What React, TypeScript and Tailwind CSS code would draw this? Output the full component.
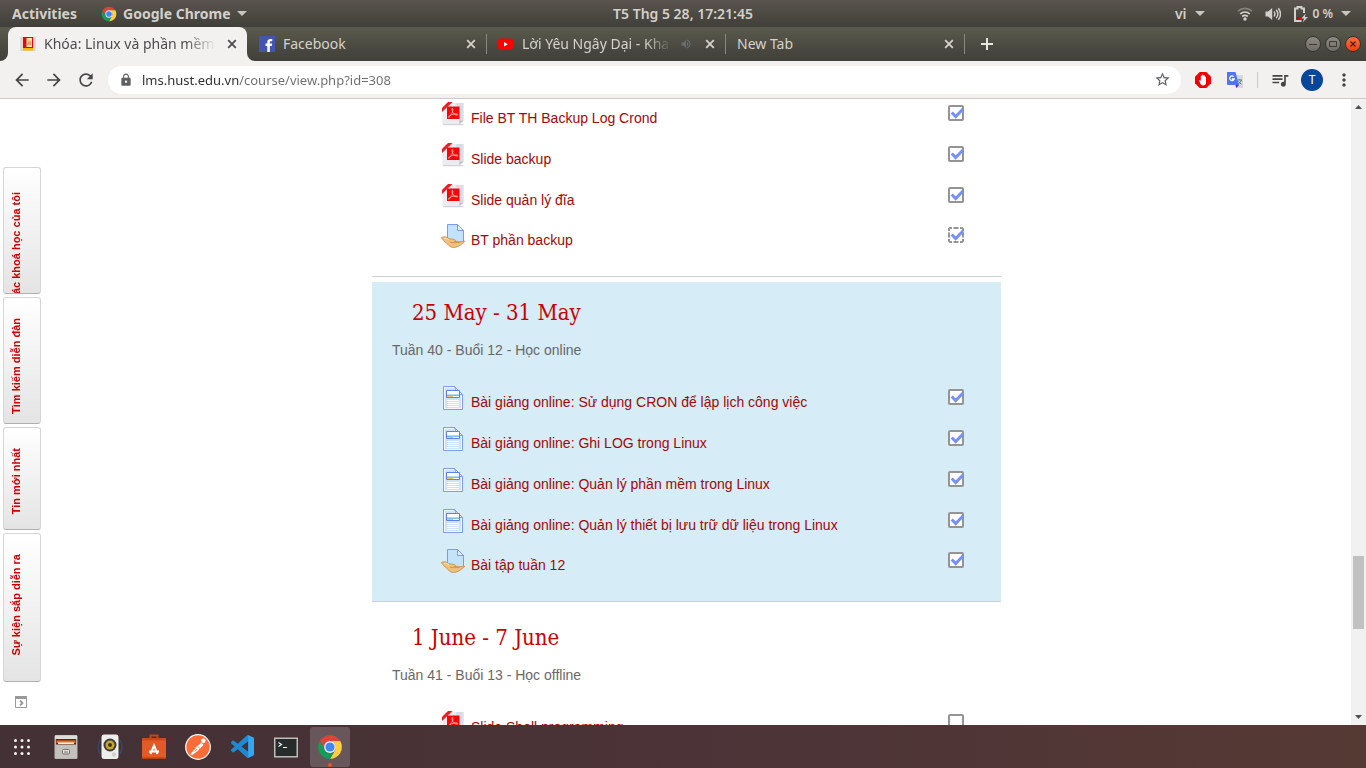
import React from "react";
import {
  MdArrowBack,
  MdArrowForward,
  MdLock,
  MdMoreVert,
  MdQueueMusic,
  MdRefresh,
  MdStarBorder,
  MdVolumeUp,
} from "react-icons/md";

type ActivityKind = "pdf" | "page" | "assign";
type Activity = { id: string; kind: ActivityKind; name: string; done: boolean; auto?: boolean };
type Week = { id: string; title?: string; summary?: string; current?: boolean; items: Activity[] };

const weeks: Week[] = [
  {
    id: "w39",
    items: [
      { id: "a1", kind: "pdf", name: "File BT TH Backup Log Crond", done: true },
      { id: "a2", kind: "pdf", name: "Slide backup", done: true },
      { id: "a3", kind: "pdf", name: "Slide quản lý đĩa", done: true },
      { id: "a4", kind: "assign", name: "BT phần backup", done: true, auto: true },
    ],
  },
  {
    id: "w40",
    title: "25 May - 31 May",
    summary: "Tuần 40 - Buổi 12 - Học online",
    current: true,
    items: [
      { id: "b1", kind: "page", name: "Bài giảng online: Sử dụng CRON để lập lịch công việc", done: true },
      { id: "b2", kind: "page", name: "Bài giảng online: Ghi LOG trong Linux", done: true },
      { id: "b3", kind: "page", name: "Bài giảng online: Quản lý phần mềm trong Linux", done: true },
      { id: "b4", kind: "page", name: "Bài giảng online: Quản lý thiết bị lưu trữ dữ liệu trong Linux", done: true },
      { id: "b5", kind: "assign", name: "Bài tập tuần 12", done: true },
    ],
  },
  {
    id: "w41",
    title: "1 June - 7 June",
    summary: "Tuần 41 - Buổi 13 - Học offline",
    items: [{ id: "c1", kind: "pdf", name: "Slide Shell programming", done: false }],
  },
];

function ChromeLogo({ className }: { className: string }) {
  return (
    <svg viewBox="0 0 48 48" className={className} aria-hidden="true">
      <path fill="#db4437" d="M4.95 13A22 22 0 0 1 43.05 13H24A11 11 0 0 0 14.47 29.5Z" />
      <path fill="#ffcd40" d="M43.05 13A22 22 0 0 1 24 46L33.53 29.5A11 11 0 0 0 24 13Z" />
      <path fill="#0f9d58" d="M24 46A22 22 0 0 1 4.95 13L14.47 29.5A11 11 0 0 0 33.53 29.5Z" />
      <circle cx="24" cy="24" r="11" fill="#f1f1f1" />
      <circle cx="24" cy="24" r="8.5" fill="#4285f4" />
    </svg>
  );
}

function Caret() {
  return (
    <svg viewBox="0 0 10 5" className="h-[5px] w-[10px]" aria-hidden="true">
      <path d="M0 0h10L5 5z" fill="#c9c7c1" />
    </svg>
  );
}

function TopBar() {
  return (
    <header className="grid h-[27px] shrink-0 grid-cols-[1fr_auto_1fr] items-center bg-linear-to-b from-[#5a554e] to-[#403f39] text-sm font-semibold text-[#d2d0ca] [text-shadow:0_-1px_0_#33322e]">
      <div className="flex items-center pl-3 font-bold">
        <button type="button">Activities</button>
        <button type="button" className="ml-6 flex items-center gap-1.5">
          <ChromeLogo className="size-4" />
          Google Chrome
          <Caret />
        </button>
      </div>
      <button type="button">T5 Thg 5 28, 17:21:45</button>
      <div className="flex items-center justify-end pr-[15px]">
        <button type="button" className="flex items-center gap-2">
          vi
          <Caret />
        </button>
        <button type="button" className="ml-8 flex items-center text-xs" aria-label="System menu">
          <svg viewBox="0 0 16 14" className="h-[14px] w-4" fill="none" stroke="#d2d0ca" strokeWidth="1.7" aria-hidden="true">
            <path d="M1 4.2C5 .4 11 .4 15 4.2" opacity=".4" />
            <path d="M3.2 7C6 4.4 10 4.4 12.800 7" />
            <path d="M5.200 9.500c1.700-1.500 3.900-1.500 5.600 0" />
            <circle cx="8" cy="12" r="1.700" fill="#d2d0ca" stroke="none" />
          </svg>
          <svg viewBox="0 0 16 16" className="ml-3 size-4" fill="none" stroke="#d2d0ca" strokeWidth="1.4" aria-hidden="true">
            <path d="M0.500 5.500H3L7.200 2v12L3 10.500H.5z" fill="#d2d0ca" stroke="none" />
            <path d="M9 5.500c1.100 1.500 1.100 3.500 0 5M11.200 3.800c2 2.500 2 5.900 0 8.400M13.300 2.200c2.700 3.500 2.700 8.100 0 11.600" />
          </svg>
          <svg viewBox="0 0 16 18" className="ml-3 h-[18px] w-4" aria-hidden="true">
            <path d="M8.500 16H2V3.500h2.500V2h4v1.500H11V8" fill="none" stroke="#d2d0ca" strokeWidth="2" />
            <path d="M4 12h4v2.500H4z" fill="#d40000" />
            <path d="M12.500 8.500L8.500 13.500h2.700L9.500 17.500 15 12h-3z" fill="#d2d0ca" />
          </svg>
          <span className="ml-1">0 %</span>
          <span className="ml-2">
            <Caret />
          </span>
        </button>
      </div>
    </header>
  );
}

function HustIcon() {
  return (
    <svg viewBox="0 0 16 16" className="size-4 shrink-0" aria-hidden="true">
      <path d="M0 1h16v14H0z" fill="#dcd9d8" />
      <path d="M3 1h10v11H3z" fill="#e30613" />
      <path d="M6.500 2H12v9H6.500z" fill="#fbe7a4" />
      <path d="M7 9l2-5 1 2 1-2v5z" fill="#f39a5e" />
      <path d="M3 12h10v2.500H3z" fill="#fbb400" />
    </svg>
  );
}

function FacebookIcon() {
  return (
    <svg viewBox="0 0 16 16" className="size-4 shrink-0" aria-hidden="true">
      <path d="M0 0h16v16H0z" fill="#4355b0" />
      <path d="M8.300 16V10H6.500V7.600h1.800V6.200c0-2.100 1.200-3.200 3.200-3.200h1.700v2.300h-1.200c-.9 0-1.200.4-1.200 1.200v1.100h2.400L12.800 10h-2v6z" fill="#fff" />
    </svg>
  );
}

function YoutubeIcon() {
  return (
    <svg viewBox="0 0 16 16" className="size-4 shrink-0" aria-hidden="true">
      <rect x="0" y="2.500" width="15" height="11" rx="2.500" fill="#f00" />
      <path d="M6 6v4.400l3.800-2.200z" fill="#fff" />
    </svg>
  );
}

type Tab = { title: string; icon?: React.ReactNode; active?: boolean; audio?: boolean; faded?: boolean; divider?: boolean };

const tabs: Tab[] = [
  { title: "Khóa: Linux và phần mềm", icon: <HustIcon />, active: true, faded: true },
  { title: "Facebook", icon: <FacebookIcon />, divider: true },
  { title: "Lời Yêu Ngây Dại - Kha", icon: <YoutubeIcon />, audio: true, faded: true, divider: true },
  { title: "New Tab", divider: true },
];

function TabItem({ tab }: { tab: Tab }) {
  return (
    <div
      className={
        tab.active
          ? "relative flex w-[239px] min-w-0 items-center gap-2 rounded-t-lg bg-[#f2f1f0] pr-[7px] pl-3 text-[#4c4c4c]"
          : "relative flex w-[239px] min-w-0 items-center gap-2 pr-[7px] pl-3 text-[#d5d3cc]"
      }
    >
      {tab.active && (
        <>
          <svg viewBox="0 0 8 8" className="absolute bottom-0 -left-2 size-2" aria-hidden="true">
            <path d="M8 0v8H0a8 8 0 0 0 8-8z" fill="#f2f1f0" />
          </svg>
          <svg viewBox="0 0 8 8" className="absolute -right-2 bottom-0 size-2" aria-hidden="true">
            <path d="M0 0v8h8a8 8 0 0 1-8-8z" fill="#f2f1f0" />
          </svg>
        </>
      )}
      {tab.divider && <span className="absolute top-[7px] -right-px h-5 w-px bg-[#8b897f]" />}
      {tab.icon}
      <button
        type="button"
        className={
          tab.faded
            ? "min-w-0 flex-1 overflow-hidden text-left whitespace-nowrap [mask-image:linear-gradient(to_right,black_82%,transparent)]"
            : "min-w-0 flex-1 overflow-hidden text-left whitespace-nowrap"
        }
      >
        {tab.title}
      </button>
      {tab.audio && <MdVolumeUp className="mr-0.5 size-3 shrink-0 text-[#686d7c]" />}
      <button type="button" aria-label="Close tab" className="flex size-4 shrink-0 items-center justify-center">
        <svg viewBox="0 0 16 16" className="size-4" aria-hidden="true">
          <path d="M4.200 4.200l7.600 7.600M11.800 4.200l-7.600 7.600" stroke="currentColor" strokeWidth="1.800" />
        </svg>
      </button>
    </div>
  );
}

function TabStrip() {
  return (
    <div className="flex h-[34px] shrink-0 bg-linear-to-b from-[#5b5a4d] to-[#403f39] pr-[5px] pl-2 text-sm">
      {tabs.map((tab) => (
        <TabItem key={tab.title} tab={tab} />
      ))}
      <button type="button" aria-label="New tab" className="ml-[13px] flex items-center text-[#e8e6e0]">
        <svg viewBox="0 0 20 20" className="size-5" aria-hidden="true">
          <path d="M10 4v12M4 10h12" stroke="currentColor" strokeWidth="2" />
        </svg>
      </button>
      <div className="ml-auto flex items-center gap-1">
        <button type="button" aria-label="Minimize" className="size-4 rounded-full border border-[#35342f] bg-linear-to-b from-[#8c8a83] to-[#6f6d66]">
          <svg viewBox="0 0 14 14" aria-hidden="true">
            <path d="M3 7.500h8" stroke="#3b3a35" />
          </svg>
        </button>
        <button type="button" aria-label="Maximize" className="size-4 rounded-full border border-[#35342f] bg-linear-to-b from-[#8c8a83] to-[#6f6d66]">
          <svg viewBox="0 0 14 14" aria-hidden="true">
            <path d="M3.500 4.500h7v5h-7z" fill="none" stroke="#3b3a35" />
          </svg>
        </button>
        <button type="button" aria-label="Close" className="size-4 rounded-full border border-[#35342f] bg-linear-to-b from-[#fb6d40] to-[#ee3f05]">
          <svg viewBox="0 0 14 14" aria-hidden="true">
            <path d="M4.500 4.500l5 5m0-5l-5 5" stroke="#4a2010" strokeWidth="1.300" />
          </svg>
        </button>
      </div>
    </div>
  );
}

const toolButton = "flex h-7 w-8 shrink-0 items-center justify-center text-[#454545]";

function Toolbar() {
  return (
    <div className="flex h-[38px] shrink-0 items-center border-b border-[#cbcac9] bg-[#f2f1f0] px-1.5">
      <button type="button" aria-label="Back" className={toolButton}>
        <MdArrowBack className="size-5" />
      </button>
      <button type="button" aria-label="Forward" className={toolButton}>
        <MdArrowForward className="size-5" />
      </button>
      <button type="button" aria-label="Reload" className={toolButton}>
        <MdRefresh className="size-5" />
      </button>
      <form className="mx-1.5 flex h-7 min-w-0 flex-1 items-center rounded-full bg-white pr-[10px] pl-[11px]">
        <MdLock className="size-[14px] shrink-0 text-[#5f6063]" />
        <label htmlFor="address" className="hidden">
          Address
        </label>
        <input
          id="address"
          defaultValue="lms.hust.edu.vn/course/view.php?id=308"
          className="ml-[9px] min-w-0 flex-1 bg-linear-to-r from-[#2c2c2c] from-[97px] to-[#6c6c6c] to-[97px] bg-clip-text text-[13px] leading-5 text-transparent caret-black outline-none"
        />
        <button type="button" aria-label="Bookmark" className="text-[#5f6063]">
          <MdStarBorder className="size-[17px]" />
        </button>
      </form>
      <button type="button" aria-label="AdBlock" className={toolButton}>
        <svg viewBox="0 0 16 16" className="size-4" aria-hidden="true">
          <path d="M4.700 0h6.600L16 4.700v6.600L11.300 16H4.700L0 11.300V4.700z" fill="#f20000" />
          <path d="M4 8.200l1-.3.800 1.200V4c0-.8 1.100-.8 1.200 0l.1-1c.1-.8 1.200-.8 1.300 0l.1.700c.2-.8 1.200-.7 1.300.1V5c.2-.7 1.200-.6 1.200.2v5.300c0 1.900-1 3-2.800 3-1.700 0-2.400-.8-2.900-2z" fill="#fff" />
        </svg>
      </button>
      <button type="button" aria-label="Google Translate" className={toolButton}>
        <svg viewBox="0 0 16 16" className="size-4" aria-hidden="true">
          <path d="M6 3h10v13H9z" fill="#d6d8d9" />
          <path d="M0 0h8.500L12 13H1a1 1 0 0 1-1-1z" fill="#4e74f8" />
          <path d="M8.500 13H12l-2.800 3z" fill="#3a2fc0" />
          <path d="M6.800 4.700A2.300 2.300 0 1 0 7.200 7H5" fill="none" stroke="#fff" strokeWidth="1.300" />
          <path d="M10.500 8h4.500M12.700 7v1M14.200 8c-.4 2-1.500 3.200-3 4M11.500 9.500c.7 1.200 1.700 2.100 3 2.700" fill="none" stroke="#5e7f88" />
        </svg>
      </button>
      <span className="mx-1.5 h-4 w-px bg-[#c9c8c7]" />
      <button type="button" aria-label="Media" className={toolButton}>
        <MdQueueMusic className="size-5" />
      </button>
      <button type="button" aria-label="Profile" className={toolButton}>
        <span className="flex size-[22px] items-center justify-center rounded-full bg-[#06479c] text-xs text-white">T</span>
      </button>
      <button type="button" aria-label="Menu" className={toolButton}>
        <MdMoreVert className="size-5" />
      </button>
    </div>
  );
}

function PdfIcon() {
  return (
    <svg viewBox="0 0 24 24" className="size-6" aria-hidden="true">
      <path d="M2 22.700h20.500" stroke="#c9c9cd" />
      <path d="M1.500 1h21v17.500l-4 3.500h-17z" fill="#ebebf1" />
      <path d="M15 1h7.500v17.500l-4 3.500z" fill="#dcdce6" />
      <path d="M22.500 18.500h-4V22z" fill="#bdbdc6" />
      <path d="M0 0h6L0 6.500z" fill="#fff" />
      <path d="M7 0h4.500L1 10V6z" fill="#ee1c25" />
      <path d="M6 4.500h12.500v12.500H6z" fill="#f30808" />
      <path d="M11.300 6.300c.8 0 .7 1.700.3 3.200-.6 2-2.700 5.600-3.900 5.800-.9-.7 1.200-2.200 3.400-2.800 2.200-.6 5.400-.9 5.800 0 .2.900-2.700.6-4.300-1-1.300-1.400-2.100-4.900-1.300-5.200z" fill="none" stroke="#ffd5d5" strokeWidth=".7" />
    </svg>
  );
}

function PageIcon() {
  return (
    <svg viewBox="0 0 24 24" className="size-6" aria-hidden="true">
      <path d="M2.500.5h11l8 8v15h-19z" fill="#f4f9ff" stroke="#7f9cf0" />
      <path d="M4 2h8.500L20 9.500V22H4z" fill="#cde3fb" />
      <path d="M13.500.5l8 8h-5z" fill="#e6effc" stroke="#7f9cf0" />
      <path d="M5.500 4.500h13v7h-13z" fill="#fff" stroke="#5f80e6" />
      <path d="M6 9.200h12" stroke="#6fbdf0" strokeWidth="1.500" />
      <path d="M6 10.500h6" stroke="#e8c76b" />
      <path d="M6 14.500h12M6 16.500h12M6 18.500h12M6 20.500h12" stroke="#fff" />
    </svg>
  );
}

function AssignIcon() {
  return (
    <svg viewBox="0 0 24 24" className="size-6" aria-hidden="true">
      <path d="M6.500.5h10l6 6v12h-16z" fill="#c3e2fb" stroke="#7a9bee" />
      <path d="M16.500.5v6h6z" fill="#e4f1fd" stroke="#7a9bee" />
      <path d="M.3 13.500c3-1.500 5.500-.7 7.500 1l6 1.200c1.500.5.8 1.800-.5 1.800l6.500.3 3.500-.8c.8.800-.5 1.500-1.500 2.200-3 2.300-6 4.300-9 4.300-4 0-5-2.500-7.500-4.500-1.700-1.500-3.500-3-5-5.500z" fill="#f3bf7c" stroke="#c98a49" strokeWidth=".8" />
      <path d="M3 14.500c2-.5 3.500 0 5 1.500" fill="none" stroke="#fde0b4" />
      <path d="M9 18.300c3 .5 6 .5 9.500 0" fill="none" stroke="#c98a49" strokeWidth=".8" />
    </svg>
  );
}

function ActivityRow({ item }: { item: Activity }) {
  return (
    <li className={item.kind === "assign" ? "flex h-[41px] items-start pt-[2px]" : "flex h-[41px] items-start pt-[3px]"}>
      {item.kind === "pdf" && <PdfIcon />}
      {item.kind === "page" && <PageIcon />}
      {item.kind === "assign" && <AssignIcon />}
      <a href={`#${item.id}`} id={`${item.id}-name`} className="mt-1.5 ml-1.5 text-sm leading-5 text-[#a30808]">
        {item.name}
      </a>
      <span className="relative mt-[3px] ml-auto block size-4">
        <input
          type="checkbox"
          defaultChecked={item.done}
          aria-labelledby={`${item.id}-name`}
          className={
            item.auto
              ? "peer block size-4 appearance-none rounded-[2px] bg-white"
              : "peer block size-4 appearance-none rounded-[2px] border-2 border-[#949494] bg-white"
          }
        />
        {item.auto && (
          <svg viewBox="0 0 16 16" className="pointer-events-none absolute inset-0 size-4" fill="none" stroke="#949494" strokeWidth="2" aria-hidden="true">
            <path d="M1 4V2l1-1h2M12 1h2l1 1v2M15 12v2l-1 1h-2M4 15H2l-1-1v-2" />
            <path d="M5.500 1h5M5.500 15h5M1 5.500v5M15 5.500v5" />
          </svg>
        )}
        <svg viewBox="0 0 16 16" className="pointer-events-none absolute inset-0 hidden size-4 peer-checked:block" aria-hidden="true">
          <path d="M3.700 7.500l4 4L15 4" fill="none" stroke="#7590f8" strokeWidth="3" />
        </svg>
      </span>
    </li>
  );
}

function WeekSection({ week }: { week: Week }) {
  return (
    <section
      className={
        week.current
          ? "mb-[5px] border-b border-[#c8d3d8] bg-[#d6ecf7] pr-[37px] pb-[13px] pl-5"
          : "mb-[5px] border-b border-[#cfcfcf] pr-[37px] pb-[13px] pl-5"
      }
    >
      {week.title && (
        <div className="mb-[23px] pt-4">
          <h3 className="pl-5 font-['DejaVu_Serif_Condensed','DejaVu_Serif',serif] text-[22px] leading-[30px] text-[#cc0000]">{week.title}</h3>
          <p className="mt-3 text-sm leading-5 text-[#686868]">{week.summary}</p>
        </div>
      )}
      <ul className="pl-[49px]">
        {week.items.map((item) => (
          <ActivityRow key={item.id} item={item} />
        ))}
      </ul>
    </section>
  );
}

const dockedBlocks = [
  { title: "Các khoá học của tôi", size: "h-[127px] pt-6" },
  { title: "Tìm kiếm diễn đàn", size: "h-[127px] pt-5" },
  { title: "Tin mới nhất", size: "h-[103px] pt-5" },
  { title: "Sự kiện sắp diễn ra", size: "h-[149px] pt-5" },
];

function BlockDock() {
  return (
    <aside className="flex w-11 shrink-0 flex-col gap-[3px] pt-[68px] pl-[3px]">
      {dockedBlocks.map((block) => (
        <button
          type="button"
          key={block.title}
          className={`${block.size} flex w-[38px] shrink-0 flex-col items-start justify-start overflow-hidden rounded-[3px] border border-[#d6d6d6] border-b-[#b0b0b0] bg-linear-to-b from-white to-[#e4e4e4] pl-1`}
        >
          <span className="shrink-0 rotate-180 text-[11px] leading-4 font-bold whitespace-nowrap text-[#cc0000] [writing-mode:vertical-rl]">
            {block.title}
          </span>
        </button>
      ))}
      <button type="button" aria-label="Undock all" className="mt-[11px] ml-3 size-3">
        <svg viewBox="0 0 12 12" aria-hidden="true">
          <path d="M.5.5h11v11H.5z" fill="#fff" stroke="#999" />
          <path d="M0 0h12v3H0z" fill="#999" />
          <path d="M5 4.500L7.500 7 5 9.500" fill="none" stroke="#999" strokeWidth="1.800" />
        </svg>
      </button>
    </aside>
  );
}

function Scrollbar() {
  return (
    <div className="flex w-[15px] shrink-0 flex-col items-center bg-[#f1f1f1]" aria-hidden="true">
      <svg viewBox="0 0 15 15" className="size-[15px]">
        <path d="M4 10h7L7.500 6z" fill="#505050" />
      </svg>
      <div className="grow-[442]" />
      <div className="h-[73px] w-[11px] bg-[#c1c1c1]" />
      <div className="grow-[81]" />
      <svg viewBox="0 0 15 15" className="size-[15px]">
        <path d="M4 5h7L7.500 9z" fill="#505050" />
      </svg>
    </div>
  );
}

const launchers: { name: string; active?: boolean; icon: React.ReactNode }[] = [
  {
    name: "Show applications",
    icon: (
      <svg viewBox="0 0 26 26" className="size-[26px]" fill="#f4f2f2">
        {[6.500, 13, 19.500].map((y) => [6.500, 13, 19.500].map((x) => <circle key={`${x}-${y}`} cx={x} cy={y} r="1.500" />))}
      </svg>
    ),
  },
  {
    name: "Files",
    icon: (
      <svg viewBox="0 0 26 26" className="size-[26px]">
        <rect x="1.500" y="1" width="23" height="24" rx="1.500" fill="#b9b6b1" />
        <path d="M2 1.500h22V5H2z" fill="#dedcd8" />
        <path d="M3 5h20v6H3z" fill="#5d2b14" />
        <path d="M3.500 6.500h19V9h-19z" fill="#ee6b2d" />
        <path d="M5 8.500h16V10H5z" fill="#fff3e3" />
        <path d="M2 10.500h22V24H2z" fill="#c3c1bd" />
        <rect x="9.500" y="15.500" width="7" height="4.500" rx="1" fill="#e2e1de" stroke="#6f6c68" />
        <path d="M11 18h4" stroke="#6f6c68" />
      </svg>
    ),
  },
  {
    name: "Rhythmbox",
    icon: (
      <svg viewBox="0 0 26 26" className="size-[26px]">
        <path d="M3 6Q-1 13 3 20M23 6q4 7 0 14" fill="none" stroke="#33496b" strokeWidth="1.500" />
        <path d="M7 .5h12q2.500 0 2.500 3v18q0 3.500-2.500 3.500H7q-2.500 0-2.500-3.500v-18q0-3 2.500-3z" fill="#eeeeec" />
        <circle cx="13" cy="11" r="6.500" fill="#3c3c3a" />
        <circle cx="13" cy="11" r="4.500" fill="#c7a42f" />
        <circle cx="13" cy="11" r="2" fill="#3b3413" />
        <circle cx="17" cy="20.500" r="2.200" fill="#d0d0cc" />
      </svg>
    ),
  },
  {
    name: "Ubuntu Software",
    icon: (
      <svg viewBox="0 0 26 26" className="size-[26px]">
        <path d="M9.500 6V1.500h7V6" fill="none" stroke="#c2461c" strokeWidth="2" />
        <path d="M1 4h24v21H1z" fill="#e25a28" />
        <path d="M1 4h24v2.500H1z" fill="#c94a1c" />
        <path d="M1 23.500h24V25H1z" fill="#b33f14" />
        <path d="M9.500 20L13 11.500l3.500 8.500M8 17.500h10" fill="none" stroke="#fff" strokeWidth="2" />
      </svg>
    ),
  },
  {
    name: "Postman",
    icon: (
      <svg viewBox="0 0 26 26" className="size-[26px]">
        <circle cx="13" cy="13" r="12.300" fill="#ff6c37" stroke="#fff" strokeWidth="1.200" />
        <circle cx="18.300" cy="6.800" r="2.300" fill="#fff" />
        <path d="M16.500 8.500l2 2.500-5.500 5.500-3-2.500z" fill="#fff" />
        <path d="M10.800 14.800L6 20.500M13 16l-6.500 4.700" stroke="#fff" strokeWidth="1.300" />
        <path d="M12.500 12.500l3 2.500" stroke="#ff6c37" strokeWidth=".7" />
      </svg>
    ),
  },
  {
    name: "Visual Studio Code",
    icon: (
      <svg viewBox="0 0 24 24" className="size-[23px]">
        <path
          fill="#1f8ad2"
          d="M23.150 2.587L18.210.210a1.494 1.494 0 0 0-1.705.290l-9.460 8.630-4.120-3.128a.999.999 0 0 0-1.276.057L.327 7.261A1 1 0 0 0 .326 8.740L3.899 12 .326 15.260a1 1 0 0 0 .001 1.479L1.650 17.940a.999.999 0 0 0 1.276.057l4.120-3.128 9.460 8.630a1.492 1.492 0 0 0 1.704.290l4.942-2.377A1.500 1.500 0 0 0 24 20.060V3.939a1.500 1.500 0 0 0-.850-1.352zm-5.146 14.861L10.826 12l7.178-5.448v10.896z"
        />
        <path fill="#35a7f0" d="M18 .200l5.150 2.387c.5.250.850.800.850 1.352v16.121c0 .6-.350 1.100-.850 1.352L18 23.800z" />
      </svg>
    ),
  },
  {
    name: "Terminal",
    icon: (
      <svg viewBox="0 0 26 26" className="size-[26px]">
        <path d="M1 3.500h24v20H1z" fill="#bdbdb9" />
        <path d="M2.500 5h21v17h-21z" fill="#262b2b" />
        <path d="M5.500 8.500l3 2-3 2M10 13.500h4" fill="none" stroke="#f0f0f0" strokeWidth="1.200" />
      </svg>
    ),
  },
  { name: "Google Chrome", active: true, icon: <ChromeLogo className="size-[26px]" /> },
];

function Launcher() {
  return (
    <nav className="flex h-[43px] shrink-0 items-center gap-1 bg-linear-to-r from-[#433135] via-[#4b3337] to-[#553933] pl-[2px]" aria-label="Dock">
      {launchers.map((app) => (
        <button
          type="button"
          key={app.name}
          aria-label={app.name}
          className={
            app.active
              ? "relative flex size-10 items-center justify-center rounded-[3px] bg-[#67575b]"
              : "relative flex size-10 items-center justify-center"
          }
        >
          {app.icon}
          {app.active && <span className="absolute bottom-0 left-[18px] size-1 rounded-full bg-[#e95420]" />}
        </button>
      ))}
    </nav>
  );
}

export default function App() {
  return (
    <div className="flex h-screen flex-col overflow-hidden bg-white font-['Noto_Sans','Open_Sans',sans-serif]">
      <TopBar />
      <TabStrip />
      <Toolbar />
      <div className="flex min-h-0 flex-1 overflow-hidden font-['Liberation_Sans',Arial,sans-serif]">
        <BlockDock />
        <main className="flex min-w-0 flex-1 justify-center pr-[22px]">
          <div className="w-full max-w-[629px]">
            {weeks.map((week) => (
              <WeekSection key={week.id} week={week} />
            ))}
          </div>
        </main>
        <Scrollbar />
      </div>
      <Launcher />
    </div>
  );
}
